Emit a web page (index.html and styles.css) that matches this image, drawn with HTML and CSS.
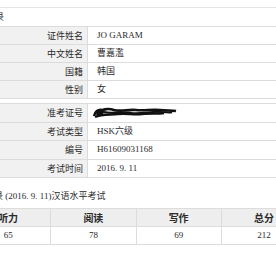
FILE: index.html
```html
<!DOCTYPE html>
<html lang="zh">
<head>
<meta charset="utf-8">
<link rel="stylesheet" href="styles.css">
</head>
<body>
<div class="page">
  <div class="top-caption">录</div>
  <table class="info">
    <tr><td class="lbl">证件姓名</td><td class="val">JO GARAM</td></tr>
    <tr><td class="lbl">中文姓名</td><td class="val">曹嘉濫</td></tr>
    <tr><td class="lbl">国籍</td><td class="val">韩国</td></tr>
    <tr><td class="lbl">性别</td><td class="val">女</td></tr>
  </table>
  <table class="info info-second">
    <tr><td class="lbl">准考证号</td><td class="val"><svg class="scribble" width="86" height="13" viewBox="0 0 86 13"><path d="M2 10 C3 6 6 3 10 4 C13 5 9 9 6 8 C9 3 16 2 22 4 C30 6 36 3 44 4 C52 5 60 3 68 4 C74 5 80 4 84 5" stroke="#111" stroke-width="2.6" fill="none"/><path d="M3 11 C10 8 18 9 26 8 C34 7 42 9 50 8 C58 7 66 8 72 7" stroke="#111" stroke-width="2.4" fill="none"/><path d="M12 6 C20 8 30 5 40 7 C50 8 60 5 70 6 C74 6 78 7 80 6" stroke="#111" stroke-width="2" fill="none"/></svg></td></tr>
    <tr><td class="lbl">考试类型</td><td class="val">HSK六级</td></tr>
    <tr><td class="lbl">编号</td><td class="val">H61609031168</td></tr>
    <tr><td class="lbl">考试时间</td><td class="val">2016. 9. 11</td></tr>
  </table>
  <div class="score-title">录 (2016. 9. 11)汉语水平考试</div>
  <table class="score">
    <tr class="head"><th>听力</th><th>阅读</th><th>写作</th><th>总分</th></tr>
    <tr><td>65</td><td>78</td><td>69</td><td>212</td></tr>
  </table>
</div>
</body>
</html>
```
FILE: styles.css
```css
html, body {
  margin: 0;
  padding: 0;
  background: #fff;
}
body {
  font-family: "Liberation Serif", "Noto Sans CJK SC", serif;
  font-size: 9px;
  color: #2a2a2a;
  overflow: hidden;
}
.page {
  width: 276px;
  border-top: 1px solid #e4e4e4;
  margin-top: 7px;
}
.top-caption {
  height: 18px;
  line-height: 18px;
  margin-left: -5px;
  font-family: "Noto Sans CJK SC", sans-serif;
}
.info {
  border-collapse: collapse;
  width: 300px;
  border-top: 1px solid #dcdcdc;
}
.info td {
  height: 17px;
  padding: 0;
  border-bottom: 1px solid #dcdcdc;
  line-height: 17px;
}
.info .lbl {
  width: 83px;
  padding-right: 4px;
  text-align: right;
  background: #f1f1f1;
  border-right: 1px solid #dcdcdc;
  font-family: "Noto Sans CJK SC", sans-serif;
}
.info .val {
  padding-left: 9px;
  font-family: "Liberation Serif", "Noto Sans CJK SC", serif;
}
.info-second {
  margin-top: 4px;
}
.info-second td {
  height: 17.5px;
}
.scribble {
  display: block;
  margin-left: -5px;
}
.score-title {
  margin-top: 9px;
  margin-left: -6px;
  height: 18px;
  line-height: 18px;
  font-family: "Liberation Serif", "Noto Sans CJK SC", serif;
}
.score {
  margin-top: 3px;
  margin-left: -35px;
  border-collapse: collapse;
  width: 342px;
  table-layout: fixed;
}
.score th, .score td {
  height: 17px;
  padding: 0;
  text-align: center;
  border: 1px solid #dcdcdc;
  line-height: 17px;
}
.score th {
  background: #eeeeee;
  font-weight: bold;
  font-size: 10px;
  font-family: "Noto Sans CJK SC", sans-serif;
}
```
